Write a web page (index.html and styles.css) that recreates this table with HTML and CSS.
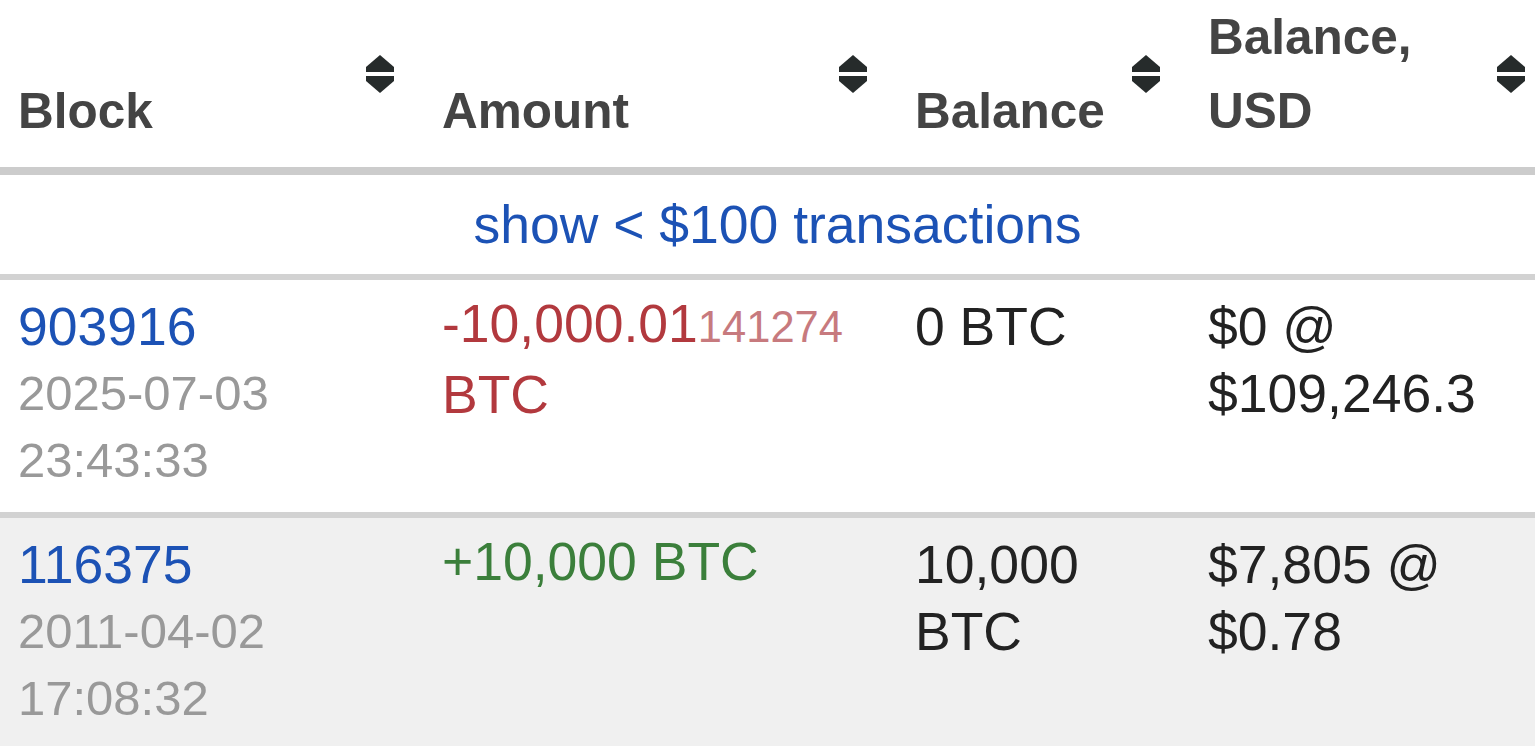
FILE: index.html
```html
<!DOCTYPE html>
<html lang="en">
<head>
<meta charset="utf-8">
<title>Transactions</title>
<link rel="stylesheet" href="styles.css">
</head>
<body>
<table class="tx">
  <colgroup>
    <col class="c-block">
    <col class="c-amount">
    <col class="c-balance">
    <col class="c-usd">
  </colgroup>
  <thead>
    <tr>
      <th>Block<svg class="sort" viewBox="0 0 30 38"><path d="M15 0 L29 12 V17 H1 V12 Z"/><path d="M1 21 H29 V26 L15 38 L1 26 Z"/></svg></th>
      <th>Amount<svg class="sort" viewBox="0 0 30 38"><path d="M15 0 L29 12 V17 H1 V12 Z"/><path d="M1 21 H29 V26 L15 38 L1 26 Z"/></svg></th>
      <th>Balance<svg class="sort" viewBox="0 0 30 38"><path d="M15 0 L29 12 V17 H1 V12 Z"/><path d="M1 21 H29 V26 L15 38 L1 26 Z"/></svg></th>
      <th>Balance, USD<svg class="sort" viewBox="0 0 30 38"><path d="M15 0 L29 12 V17 H1 V12 Z"/><path d="M1 21 H29 V26 L15 38 L1 26 Z"/></svg></th>
    </tr>
  </thead>
  <tbody>
    <tr class="show-row">
      <td colspan="4"><a class="link" href="#">show &lt; $100 transactions</a></td>
    </tr>
    <tr class="row">
      <td><a class="link" href="#">903916</a><div class="date">2025-07-03 23:43:33</div></td>
      <td class="amount"><span class="neg">-10,000.01<span class="neg-small">141274</span> BTC</span></td>
      <td class="val">0 BTC</td>
      <td class="val">$0 @ $109,246.3</td>
    </tr>
    <tr class="row alt">
      <td><a class="link" href="#">116375</a><div class="date">2011-04-02 17:08:32</div></td>
      <td class="amount"><span class="pos">+10,000 BTC</span></td>
      <td class="val">10,000 BTC</td>
      <td class="val">$7,805 @ $0.78</td>
    </tr>
  </tbody>
</table>
</body>
</html>
```

FILE: styles.css
```css
html, body {
  margin: 0;
  padding: 0;
  background: #ffffff;
  overflow: hidden;
}

body {
  font-family: "Liberation Sans", Arial, sans-serif;
  color: #222222;
}

.tx {
  width: 1555px;
  table-layout: fixed;
  border-collapse: separate;
  border-spacing: 0;
}

.c-block { width: 424px; }
.c-amount { width: 473px; }
.c-balance { width: 293px; }
.c-usd { width: 365px; }

.tx th {
  position: relative;
  text-align: left;
  vertical-align: bottom;
  font-size: 49.5px;
  font-weight: bold;
  line-height: 74px;
  color: #444444;
  padding: 0 70px 19px 18px;
  border-bottom: 8px solid #cccccc;
}

.sort {
  position: absolute;
  top: 55px;
  right: 29px;
  width: 30px;
  height: 38px;
  fill: #262b2b;
}

.tx td {
  vertical-align: top;
  font-size: 53.5px;
  line-height: 67px;
  padding: 13px 18px 18px 18px;
  border-top: 6px solid #d2d2d2;
}

.show-row td {
  border-top: none;
  text-align: center;
  padding: 16px 18px 16px 18px;
}

.link {
  color: #1c52b5;
  text-decoration: none;
}

.date {
  font-size: 49px;
  color: #999999;
}

.amount {
  line-height: 72px;
}

.tx td.amount {
  padding-top: 10px;
}

.neg {
  color: #b2393e;
}

.neg-small {
  font-size: 43.5px;
  color: #c77a7e;
}

.pos {
  color: #3b7f3b;
}

.val {
  color: #222222;
}

.alt td {
  background: #f0f0f0;
}
```
